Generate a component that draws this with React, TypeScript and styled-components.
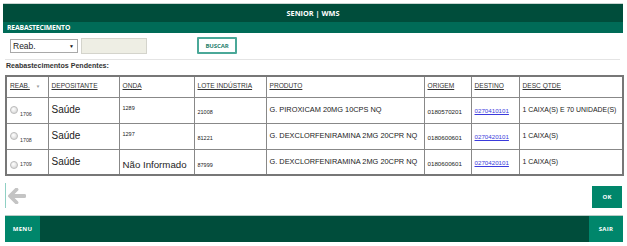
import React from 'react';
import styled, { createGlobalStyle } from 'styled-components';

const GlobalStyle = createGlobalStyle`
  html, body {
    margin: 0;
    padding: 0;
    background: #fff;
  }
  body {
    font-family: 'Liberation Sans', Arial, sans-serif;
    width: 627px;
    height: 246px;
    overflow: hidden;
  }
`;

const DARK = '#004d3b';
const MID = '#006b57';
const TEAL = '#00866b';

const Frame = styled.div`
  padding: 3px 4px 0 3px;
`;

const TopBar = styled.div`
  height: 18px;
  border-top: 1px solid #c9d6d2;
  background: ${DARK};
  color: #fff;
  font-family: 'Open Sans', sans-serif;
  font-weight: 700;
  font-size: 7.3px;
  display: flex;
  align-items: center;
  justify-content: center;
`;

const SubBar = styled.div`
  height: 11px;
  background: ${MID};
  color: #fff;
  font-family: 'Open Sans', sans-serif;
  font-weight: 700;
  font-size: 6.8px;
  display: flex;
  align-items: center;
  padding-left: 4px;
  letter-spacing: -0.15px;
`;

const Toolbar = styled.div`
  display: flex;
  align-items: center;
  padding: 4px 0 0 7px;
  height: 17px;
`;

const FakeSelect = styled.div`
  width: 61px;
  height: 12px;
  border: 1px solid #a9a9a9;
  display: flex;
  align-items: center;
  justify-content: space-between;
  padding: 0 3px 0 2px;
  font-size: 8.5px;
  color: #222;
  & > span.tri {
    font-size: 5px;
    color: #111;
  }
`;

const TextBox = styled.div`
  width: 64px;
  height: 14px;
  margin-left: 3px;
  background: #eeeee4;
  border: 1px solid #d4d4cc;
`;

const SearchButton = styled.div`
  margin-left: 50px;
  width: 36px;
  height: 13px;
  border: 2px solid #4aa898;
  border-radius: 1px;
  display: flex;
  align-items: center;
  justify-content: center;
  color: #1f7f6d;
  font-family: 'Open Sans', sans-serif;
  font-weight: 700;
  font-size: 6px;
  letter-spacing: -0.1px;
`;

const Divider = styled.div`
  margin: 5px 3px 0 2px;
  border-top: 1px solid #e4e4e4;
`;

const SectionTitle = styled.div`
  font-weight: 700;
  font-size: 7.1px;
  color: #333;
  padding: 3px 0 0 3px;
  height: 12px;
  line-height: 1;
`;

const Grid = styled.table`
  margin-left: 2px;
  width: 617px;
  border-collapse: collapse;
  table-layout: fixed;
  border: 2px solid #777;
  font-size: 6px;
  color: #222;
`;

const HeadRow = styled.tr`
  height: 21px;
`;

const BodyRow = styled.tr`
  height: 26px;
`;

const Th = styled.th`
  border: 1px solid #888;
  padding: 6px 3px 0;
  text-align: left;
  vertical-align: top;
  font-weight: 400;
  font-size: 6.6px;
  line-height: 1;
  text-decoration: underline;
  color: #333;
  white-space: nowrap;
  & > span.sort {
    text-decoration: none;
    display: inline-block;
    margin-left: 6px;
    color: #999;
    font-size: 4.5px;
  }
`;

const Td = styled.td<{ $size?: number; $top?: number }>`
  border: 1px solid #888;
  padding: ${({ $top }) => $top ?? 8}px 3px 0;
  vertical-align: top;
  font-size: ${({ $size }) => $size || 6}px;
  line-height: 1;
  white-space: nowrap;
  overflow: hidden;
`;

const Radio = styled.span`
  display: inline-block;
  width: 6px;
  height: 6px;
  border-radius: 50%;
  border: 1px solid #bbb;
  background: radial-gradient(circle at 40% 35%, #fff 0, #ddd 70%);
  vertical-align: middle;
  margin-right: 2px;
`;

const ReabNum = styled.span<{ $sub?: boolean }>`
  font-size: 5.3px;
  vertical-align: ${({ $sub }) => ($sub ? '-4px' : 'middle')};
  color: #333;
`;

const Link = styled.a`
  color: #3b3bdc;
  text-decoration: underline;
`;

const FooterRow = styled.div`
  display: flex;
  justify-content: space-between;
  align-items: flex-start;
  padding: 7px 1px 0 2px;
  height: 39px;
  box-sizing: border-box;
`;

const Back = styled.div`
  border-left: 1px solid #8fd0c4;
  height: 25px;
  padding-left: 2px;
  display: flex;
  align-items: center;
`;

const OkButton = styled.div`
  margin-top: 3px;
  width: 30px;
  height: 22px;
  background: ${TEAL};
  color: #fff;
  font-family: 'Open Sans', sans-serif;
  font-weight: 700;
  font-size: 6px;
  display: flex;
  align-items: center;
  justify-content: center;
`;

const BottomBar = styled.div`
  margin: 0 0 0 2px;
  height: 26px;
  background: ${DARK};
  display: flex;
  justify-content: space-between;
  border-top: 1px solid #b8ccc6;
`;

const BarButton = styled.div<{ $w: number }>`
  width: ${({ $w }) => $w}px;
  background: ${TEAL};
  color: #fff;
  font-family: 'Open Sans', sans-serif;
  font-weight: 700;
  font-size: 6px;
  letter-spacing: 0.3px;
  display: flex;
  align-items: center;
  justify-content: center;
`;

const ArrowIcon = () => (
  <svg width="18" height="16" viewBox="0 0 18 16">
    <path
      d="M8.5 1.5 L2 8 L8.5 14.5 M2.5 8 H16.5"
      fill="none"
      stroke="#c4c4c4"
      strokeWidth="3.8"
      strokeLinecap="round"
      strokeLinejoin="round"
    />
  </svg>
);

interface Row {
  reab: string;
  sub: boolean;
  onda: string;
  ondaBig?: boolean;
  lote: string;
  produto: string;
  origem: string;
  destino: string;
  qtde: string;
}

const rows: Row[] = [
  {
    reab: '1706',
    sub: true,
    onda: '1289',
    lote: '21008',
    produto: 'G. PIROXICAM 20MG 10CPS NQ',
    origem: '0180570201',
    destino: '0270410101',
    qtde: '1 CAIXA(S) E 70 UNIDADE(S)',
  },
  {
    reab: '1708',
    sub: true,
    onda: '1297',
    lote: '81221',
    produto: 'G. DEXCLORFENIRAMINA 2MG 20CPR NQ',
    origem: '0180600601',
    destino: '0270420101',
    qtde: '1 CAIXA(S)',
  },
  {
    reab: '1709',
    sub: false,
    onda: 'Não Informado',
    ondaBig: true,
    lote: '87999',
    produto: 'G. DEXCLORFENIRAMINA 2MG 20CPR NQ',
    origem: '0180600601',
    destino: '0270420101',
    qtde: '1 CAIXA(S)',
  },
];

const cols = [42, 71, 75, 72, 158, 47, 48, 104];

const App = () => {
  return (
    <>
      <GlobalStyle />
      <Frame>
        <TopBar>SENIOR | WMS</TopBar>
        <SubBar>REABASTECIMENTO</SubBar>
        <Toolbar>
          <FakeSelect>
            <span>Reab.</span>
            <span className="tri">▼</span>
          </FakeSelect>
          <TextBox />
          <SearchButton>BUSCAR</SearchButton>
        </Toolbar>
        <Divider />
        <SectionTitle>Reabastecimentos Pendentes:</SectionTitle>
        <Grid>
          <colgroup>
            {cols.map((w, i) => (
              <col key={i} style={{ width: w }} />
            ))}
          </colgroup>
          <thead>
            <HeadRow>
              <Th>
                REAB.<span className="sort">▼</span>
              </Th>
              <Th>DEPOSITANTE</Th>
              <Th>ONDA</Th>
              <Th>LOTE INDÚSTRIA</Th>
              <Th>PRODUTO</Th>
              <Th>ORIGEM</Th>
              <Th>DESTINO</Th>
              <Th>DESC QTDE</Th>
            </HeadRow>
          </thead>
          <tbody>
            {rows.map((r) => (
              <BodyRow key={r.reab}>
                <Td $top={r.sub ? 8 : 11}>
                  <Radio />
                  <ReabNum $sub={r.sub}>{r.reab}</ReabNum>
                </Td>
                <Td $size={10} $top={7}>
                  Saúde
                </Td>
                <Td $size={r.ondaBig ? 9.7 : 5.5} $top={r.ondaBig ? 10 : 8}>
                  {r.onda}
                </Td>
                <Td $size={5.5} $top={r.ondaBig ? 13 : 12}>
                  {r.lote}
                </Td>
                <Td $size={7.4} $top={8}>
                  {r.produto}
                </Td>
                <Td $size={6.2} $top={11}>
                  {r.origem}
                </Td>
                <Td $size={6.2} $top={10}>
                  <Link href="#">{r.destino}</Link>
                </Td>
                <Td $size={6.9} $top={9}>
                  {r.qtde}
                </Td>
              </BodyRow>
            ))}
          </tbody>
        </Grid>
        <FooterRow>
          <Back>
            <ArrowIcon />
          </Back>
          <OkButton>OK</OkButton>
        </FooterRow>
        <BottomBar>
          <BarButton $w={35}>MENU</BarButton>
          <BarButton $w={34}>SAIR</BarButton>
        </BottomBar>
      </Frame>
    </>
  );
};

export default App;
